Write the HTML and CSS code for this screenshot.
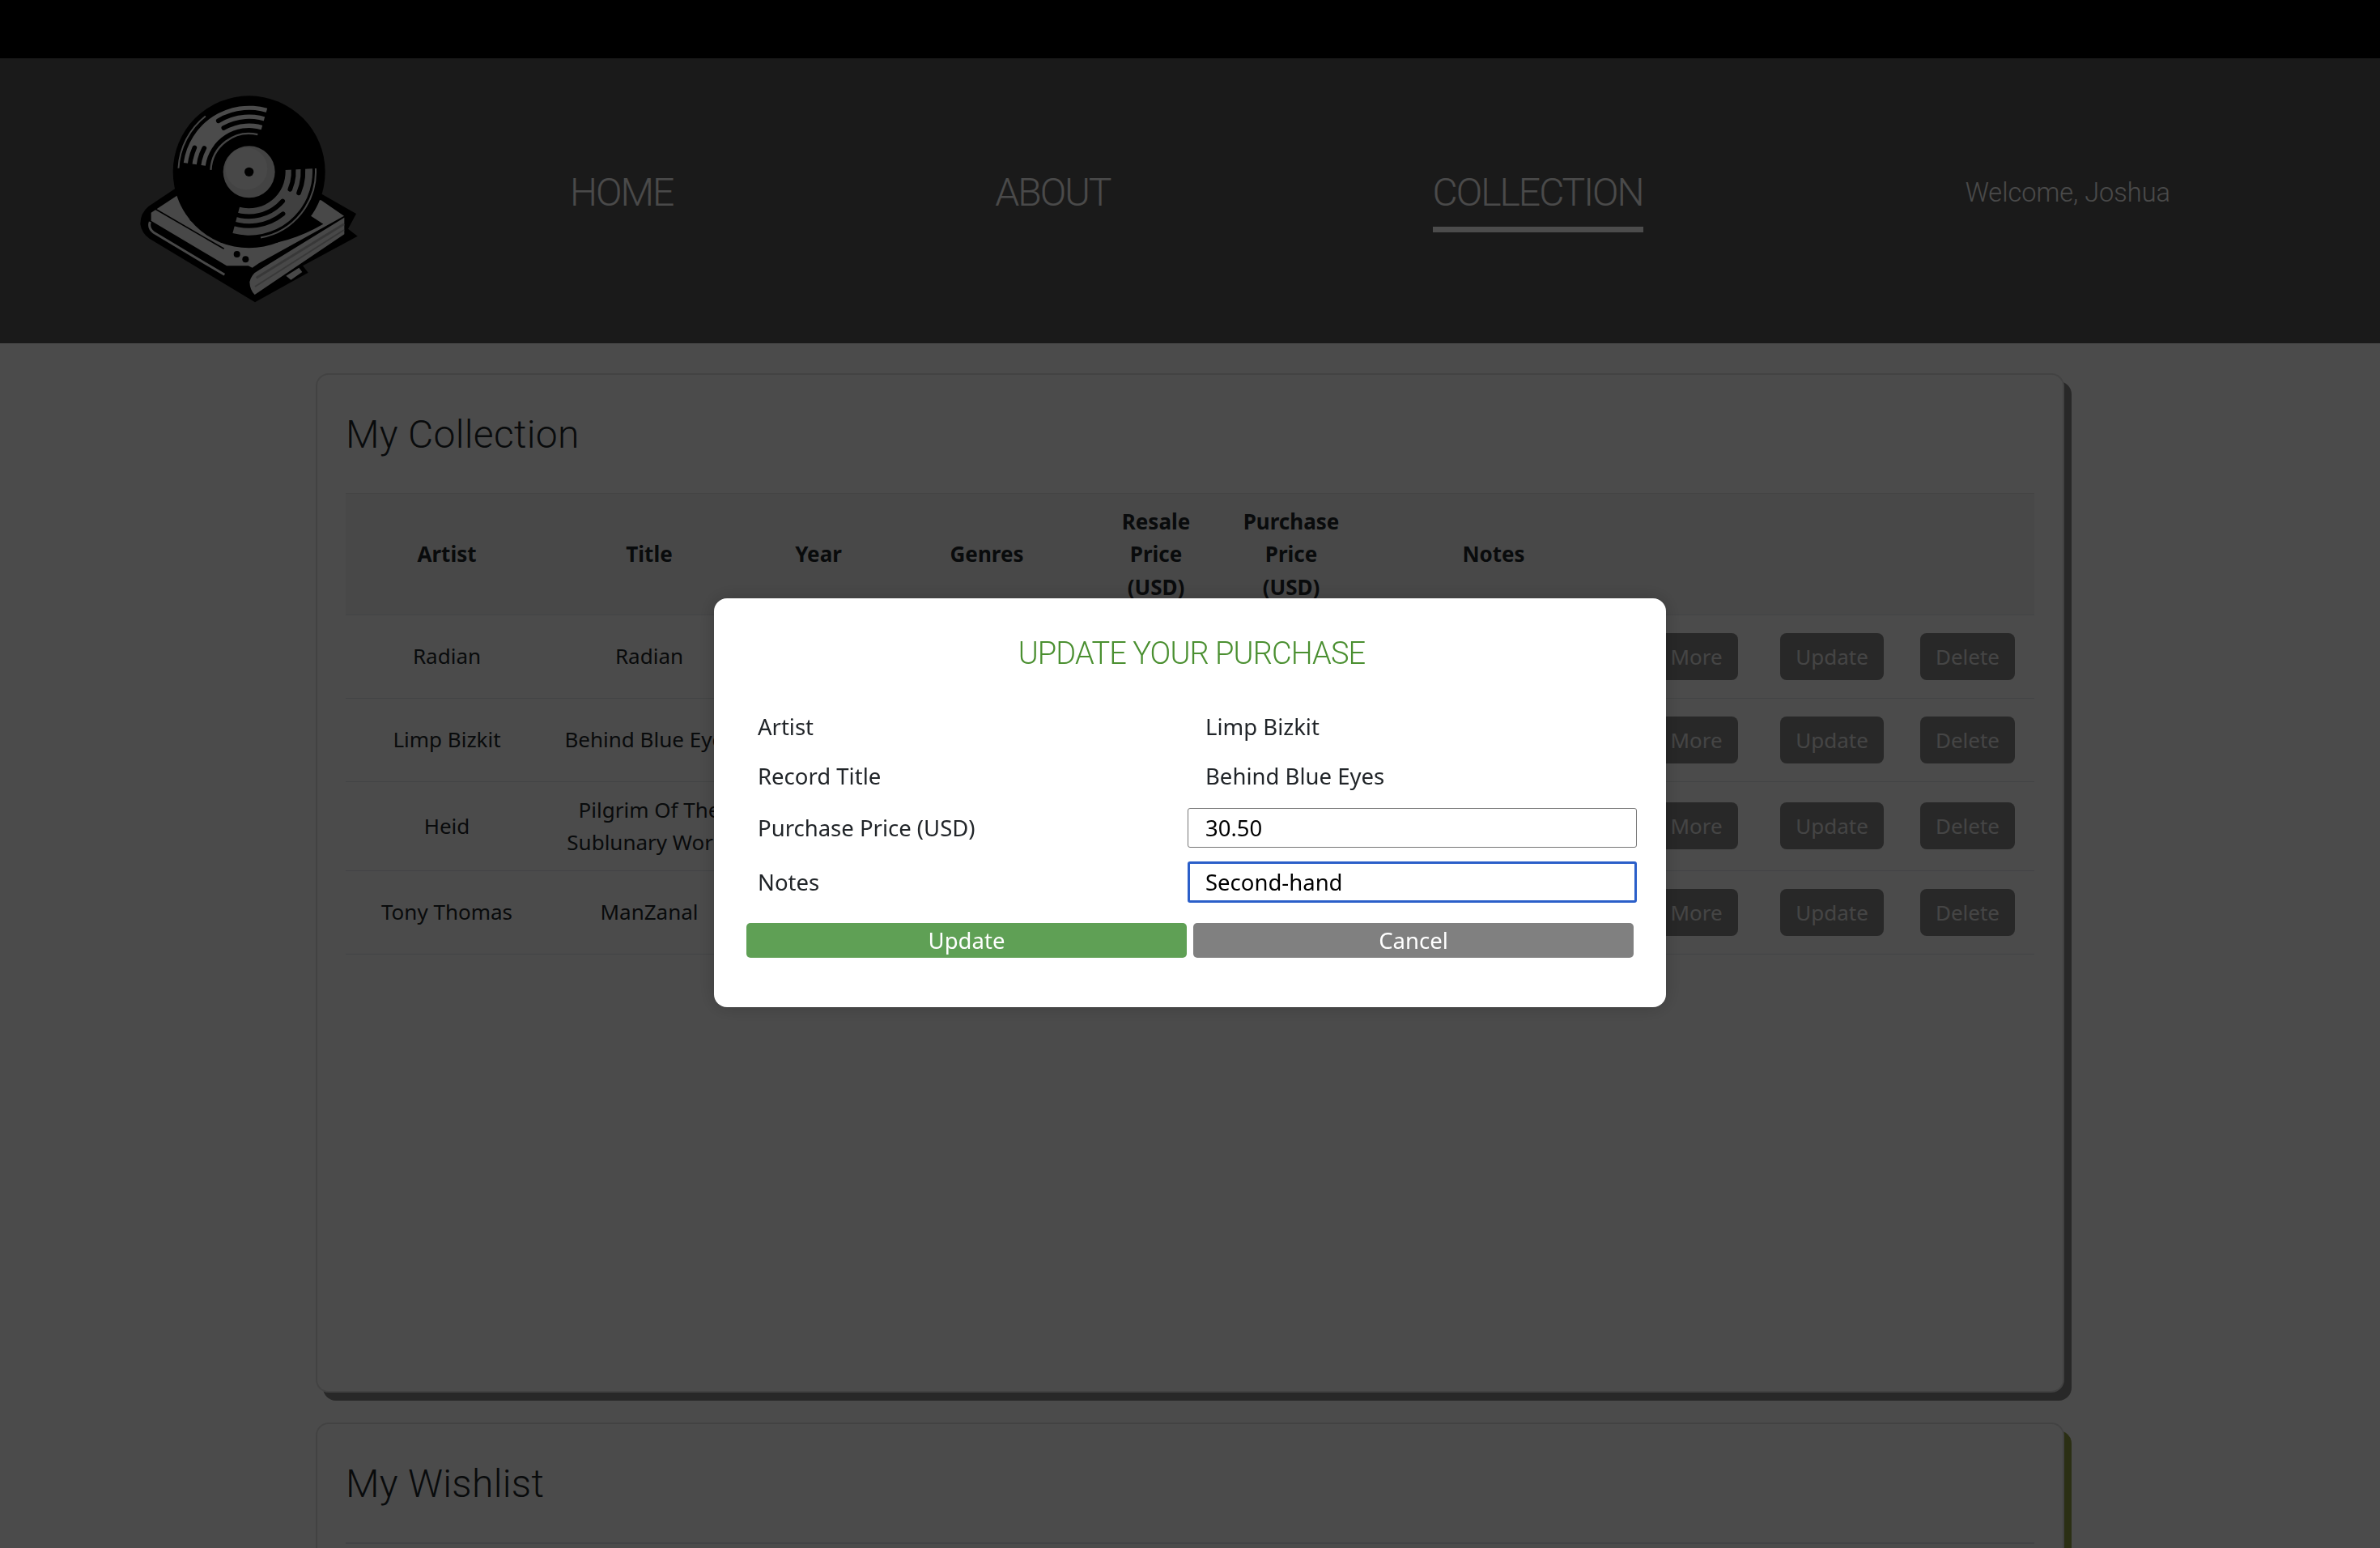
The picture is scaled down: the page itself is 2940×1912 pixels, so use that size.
FILE: index.html
```html
<!DOCTYPE html>
<html lang="en">
<head>
    <meta charset="UTF-8">
    <meta name="viewport" content="width=device-width, initial-scale=1.0">
    <title>My Collection</title>
    <link rel="stylesheet" href="styles.css">
</head>
<body>
    <div class="top-bar"></div>

    <header class="site-header">
        <svg class="logo" viewBox="0 0 1200 960" aria-label="Record logo">
            <!-- book -->
            <path fill="#000" d="M290 458 L190 525 Q160 550 160 590 Q165 625 195 645 L585 880 L782 770 L762 745 L965 635 L930 608 L960 552 L830 478 Z"/>
            <path fill="#f0f0f0" d="M200 548 L300 482 L830 502 L915 560 L600 735 L575 752 L560 745 L480 745 L200 578 Z"/>
            <path fill="none" stroke="#000" stroke-width="5" d="M215 534 L470 682"/>
            <path fill="#000" d="M343 575 Q560 750 838 590 L700 500 L400 500 Z"/>
            <path fill="none" stroke="#000" stroke-width="8" d="M206 600 L480 754"/>
            <path fill="none" stroke="#f0f0f0" stroke-width="9" d="M196 582 Q188 605 210 622 L472 778"/>
            <circle cx="518" cy="702" r="12" fill="#000"/>
            <circle cx="550" cy="721" r="12" fill="#000"/>
            <path fill="#f0f0f0" d="M565 805 Q572 775 598 762 L916 566 L916 628 L584 852 Q566 835 565 805 Z"/>
            <path fill="none" stroke="#bdbdbd" stroke-width="9" d="M590 790 L915 590"/>
            <path fill="none" stroke="#bdbdbd" stroke-width="6" d="M585 822 L915 612"/>
            <path fill="#f0f0f0" d="M700 782 L748 752 L760 768 L718 797 Z"/>
            <!-- record -->
            <circle cx="563" cy="397" r="282" fill="#000"/>
            <path fill="#fafafa" d="M320.4 362.9 A245 245 0 0 1 630.6 161.6 L608 240.4 A163 163 0 0 0 401.6 374.3 Z"/>
            <path fill="#d8d8d8" d="M797.7 384.7 A235 235 0 0 1 502.2 624 L528 527.4 A135 135 0 0 0 697.8 390 Z"/>
            <g fill="none" stroke="#000" stroke-width="17" stroke-linecap="round">
                <path d="M449.2 207.6 A221 221 0 0 1 645.9 192.1"/>
                <path d="M469 234.2 A188 188 0 0 1 633.5 222.7"/>
                <path d="M342 397 A221 221 0 0 1 361.1 307"/>
                <path d="M375 397 A188 188 0 0 1 397 308.8"/>
                <path d="M724.4 362.7 A165 165 0 0 1 714.9 461.5"/>
                <path d="M758.6 355.4 A200 200 0 0 1 747.1 475.1"/>
                <path d="M687.6 505.2 A165 165 0 0 1 501.2 550"/>
                <path d="M688.8 552.4 A200 200 0 0 1 488 582.4"/>
            </g>
            <g fill="none" stroke="#e8e8e8">
                <path stroke-width="7" d="M421.2 389.6 A142 142 0 0 1 595 258.7"/>
                <path stroke-width="6" d="M301.4 383.3 A262 262 0 0 1 401.7 190.5"/>
                <path stroke-width="6" d="M809.7 384.1 A247 247 0 0 1 606 640.2"/>
            </g>
            <circle cx="563" cy="397" r="96" fill="#e0e0e0"/>
            <circle cx="553" cy="385" r="78" fill="#f0f0f0"/>
            <circle cx="563" cy="397" r="17" fill="#000"/>
        </svg>

        <nav class="main-nav">
            <a class="nav-link" href="#">HOME</a>
            <a class="nav-link" href="#">ABOUT</a>
            <a class="nav-link active" href="#">COLLECTION</a>
            <span class="welcome">Welcome, Joshua</span>
        </nav>
    </header>

    <main>
        <section class="card">
            <h2 class="card-title">My Collection</h2>
            <table class="records">
                <colgroup>
                    <col class="col-wide"><col class="col-wide"><col class="col-year"><col class="col-genres">
                    <col class="col-price"><col class="col-buy"><col class="col-notes">
                    <col class="col-action"><col class="col-action-mid"><col class="col-action">
                </colgroup>
                <thead>
                    <tr>
                        <th>Artist</th><th>Title</th><th>Year</th><th>Genres</th>
                        <th>Resale Price (USD)</th><th>Purchase Price (USD)</th><th>Notes</th>
                        <th></th><th></th><th></th>
                    </tr>
                </thead>
                <tbody>
                    <tr>
                        <td>Radian</td><td>Radian</td><td></td><td></td><td></td><td></td><td></td>
                        <td><button class="row-btn">More</button></td>
                        <td><button class="row-btn">Update</button></td>
                        <td><button class="row-btn">Delete</button></td>
                    </tr>
                    <tr>
                        <td>Limp Bizkit</td><td>Behind Blue Eyes</td><td></td><td></td><td></td><td></td><td></td>
                        <td><button class="row-btn">More</button></td>
                        <td><button class="row-btn">Update</button></td>
                        <td><button class="row-btn">Delete</button></td>
                    </tr>
                    <tr>
                        <td>Heid</td><td>Pilgrim Of The Sublunary World</td><td></td><td></td><td></td><td></td><td></td>
                        <td><button class="row-btn">More</button></td>
                        <td><button class="row-btn">Update</button></td>
                        <td><button class="row-btn">Delete</button></td>
                    </tr>
                    <tr>
                        <td>Tony Thomas</td><td>ManZanal</td><td></td><td></td><td></td><td></td><td></td>
                        <td><button class="row-btn">More</button></td>
                        <td><button class="row-btn">Update</button></td>
                        <td><button class="row-btn">Delete</button></td>
                    </tr>
                </tbody>
            </table>
        </section>

        <section class="card card-wishlist">
            <h2 class="card-title">My Wishlist</h2>
            <div class="wishlist-rule"></div>
        </section>
    </main>

    <div class="overlay">
        <form class="modal">
            <h3 class="modal-title">UPDATE YOUR PURCHASE</h3>
            <div class="form-row">
                <span class="form-label">Artist</span>
                <span class="form-value">Limp Bizkit</span>
            </div>
            <div class="form-row">
                <span class="form-label">Record Title</span>
                <span class="form-value">Behind Blue Eyes</span>
            </div>
            <div class="form-row form-row-price">
                <label class="form-label" for="price">Purchase Price (USD)</label>
                <input class="form-input" id="price" type="text" value="30.50">
            </div>
            <div class="form-row form-row-notes">
                <label class="form-label" for="notes">Notes</label>
                <input class="form-input focused" id="notes" type="text" value="Second-hand">
            </div>
            <div class="form-actions">
                <button type="button" class="btn-update">Update</button>
                <button type="button" class="btn-cancel">Cancel</button>
            </div>
        </form>
    </div>
</body>
</html>
```
FILE: styles.css
```css
* {
    box-sizing: border-box;
}
html, body {
    height: 1912px;
    overflow: hidden;
}
body {
    margin: 0;
    background-color: #fafafa;
    color: #212529;
    font-family: "Noto Sans", "Open Sans", sans-serif;
    font-size: 26px;
    line-height: 40.5px;
}
.top-bar {
    height: 72px;
    background-color: #000;
}
.site-header {
    display: flex;
    align-items: flex-start;
    height: 352px;
    padding-left: 120px;
    background-color: #575757;
}
.logo {
    width: 400px;
    height: 320px;
    margin-top: 8px;
    flex: none;
}
.main-nav {
    display: flex;
    align-items: flex-start;
    gap: 398px;
    margin-top: 136px;
    margin-left: 184px;
    font-family: Roboto, sans-serif;
    font-weight: 300;
}
.nav-link {
    height: 79px;
    padding-bottom: 12px;
    color: #f7f7f7;
    font-size: 48px;
    letter-spacing: -2px;
    line-height: 60px;
    text-decoration: none;
}
.nav-link.active {
    border-bottom: 7px solid #fff;
}
.welcome {
    color: #f7f7f7;
    font-size: 32.5px;
    line-height: 60px;
}
.card {
    width: 2160px;
    margin: 37px auto 0;
    padding: 44px 35px 0;
    border: 2px solid #dedede;
    border-radius: 16px;
    background-color: #fcfcfc;
    box-shadow: 9px 10px 0 #858585;
}
.card:first-child {
    height: 1259px;
}
.card-wishlist {
    height: 900px;
    box-shadow: 9px 10px 0 #8f9d43;
}
.card-title {
    margin: 0 0 42px;
    font-family: Roboto, sans-serif;
    font-size: 48px;
    font-weight: 300;
    letter-spacing: 0.3px;
    line-height: 60px;
}
.wishlist-rule {
    border-top: 2px solid #dee2e6;
}
.records {
    width: 100%;
    border-collapse: collapse;
    table-layout: fixed;
    text-align: center;
}
.col-wide { width: 250px; }
.col-year { width: 168px; }
.col-genres { width: 248px; }
.col-price { width: 170px; }
.col-buy { width: 164px; }
.col-notes { width: 336px; }
.col-action { width: 165px; }
.col-action-mid { width: 170px; }
.records th {
    padding: 13.5px 16px;
    background-color: #f0f0f0;
    border-top: 1px solid #e4e4e4;
    border-bottom: 1px solid #dee2e6;
    font-weight: 700;
}
.records td {
    padding: 14px 16px;
    border-bottom: 1px solid #dee2e6;
}
.row-btn {
    display: block;
    height: 58px;
    margin: 8px auto;
    padding: 0 19px;
    border: none;
    border-radius: 8px;
    background-color: #858585;
    color: #e6e6e6;
    font-family: inherit;
    font-size: 26px;
}
.overlay {
    position: fixed;
    top: 0;
    left: 0;
    width: 100%;
    height: 100%;
    padding-top: 739px;
    background-color: rgba(0, 0, 0, 0.7);
}
.modal {
    width: 1176px;
    height: 505px;
    margin: 0 auto;
    padding: 38px 36px 0 40px;
    border-radius: 16px;
    background-color: #fff;
    box-shadow: 0 0 24px rgba(0, 0, 0, 0.2);
    font-size: 27.5px;
}
.modal-title {
    margin: 0 0 30px;
    color: #4a8f30;
    font-family: Roboto, sans-serif;
    font-size: 38px;
    font-weight: 300;
    letter-spacing: -0.9px;
    line-height: 60px;
    text-align: center;
}
.form-row {
    display: flex;
    align-items: center;
    height: 61px;
}
.form-row-price {
    height: 66px;
}
.form-row-notes {
    height: 68px;
}
.form-label {
    flex: none;
    width: 545px;
    padding-top: 2px;
    padding-left: 14px;
}
.form-value {
    padding-top: 2px;
    padding-left: 22px;
}
.form-input {
    flex: none;
    width: 555px;
    height: 49px;
    padding: 0 21px;
    border: 1px solid #767676;
    border-radius: 3px;
    color: #000;
    font-family: inherit;
    font-size: 27.5px;
}
.form-input.focused {
    height: 51px;
    border: 3px solid #2b5fc9;
    outline: none;
    padding: 0 19px;
}
.form-actions {
    display: flex;
    gap: 8px;
    margin-top: 17px;
}
.form-actions button {
    flex: none;
    width: 544px;
    height: 43px;
    border: none;
    border-radius: 5px;
    color: #fff;
    font-family: inherit;
    font-size: 27.5px;
    line-height: 43px;
    padding: 0;
}
.btn-update {
    background-color: #5fa055;
}
.btn-cancel {
    background-color: #808080;
}
```
